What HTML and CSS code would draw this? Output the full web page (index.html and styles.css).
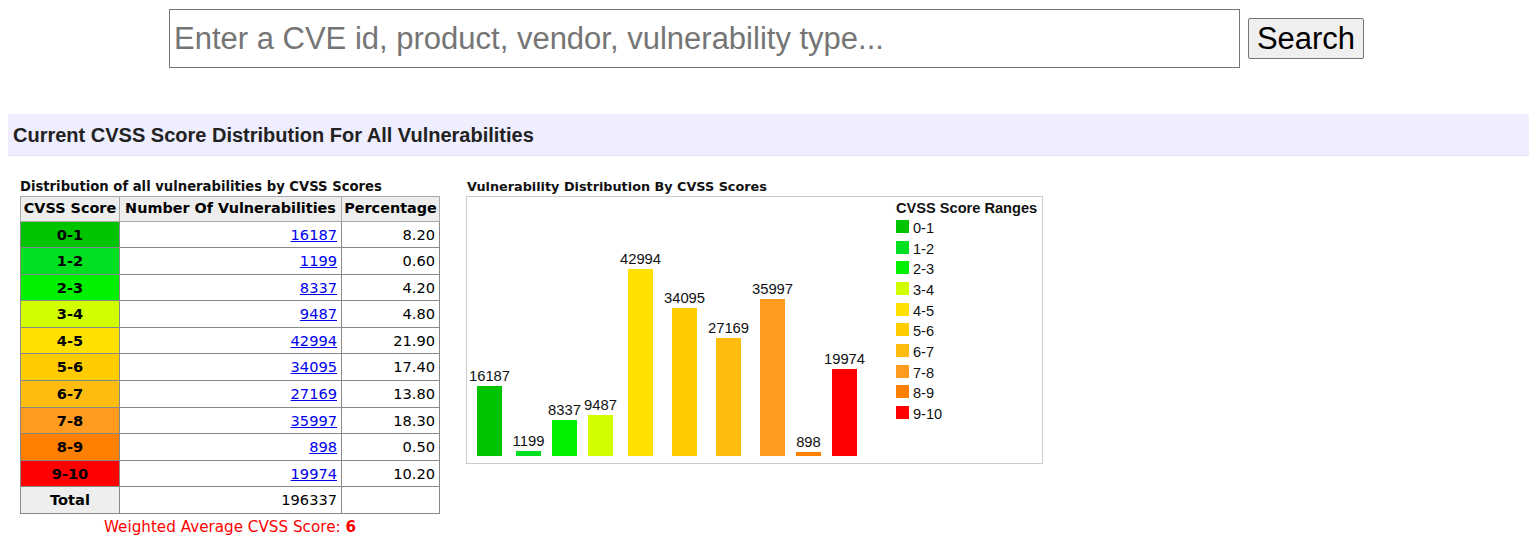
FILE: index.html
```html
<!DOCTYPE html>
<html>
<head>
<meta charset="utf-8">
<title>CVSS Score Distribution</title>
<link rel="stylesheet" href="styles.css">
</head>
<body>
<form class="search">
  <input class="search-input" type="text" placeholder="Enter a CVE id, product, vendor, vulnerability type...">
  <button class="search-btn" type="button">Search</button>
</form>

<h1 class="band">Current CVSS Score Distribution For All Vulnerabilities</h1>

<div class="stats">
  <div class="stats-table">
    <div class="caption cap-table">Distribution of all vulnerabilities by CVSS Scores</div>
    <table class="grid">
      <thead>
        <tr><th class="c1">CVSS Score</th><th class="c2">Number Of Vulnerabilities</th><th class="c3">Percentage</th></tr>
      </thead>
      <tbody>
        <tr><td class="score s0">0-1</td><td class="num"><a href="#">16187</a></td><td class="num">8.20</td></tr>
        <tr><td class="score s1">1-2</td><td class="num"><a href="#">1199</a></td><td class="num">0.60</td></tr>
        <tr><td class="score s2">2-3</td><td class="num"><a href="#">8337</a></td><td class="num">4.20</td></tr>
        <tr><td class="score s3">3-4</td><td class="num"><a href="#">9487</a></td><td class="num">4.80</td></tr>
        <tr><td class="score s4">4-5</td><td class="num"><a href="#">42994</a></td><td class="num">21.90</td></tr>
        <tr><td class="score s5">5-6</td><td class="num"><a href="#">34095</a></td><td class="num">17.40</td></tr>
        <tr><td class="score s6">6-7</td><td class="num"><a href="#">27169</a></td><td class="num">13.80</td></tr>
        <tr><td class="score s7">7-8</td><td class="num"><a href="#">35997</a></td><td class="num">18.30</td></tr>
        <tr><td class="score s8">8-9</td><td class="num"><a href="#">898</a></td><td class="num">0.50</td></tr>
        <tr><td class="score s9">9-10</td><td class="num"><a href="#">19974</a></td><td class="num">10.20</td></tr>
        <tr><td class="score total">Total</td><td class="num">196337</td><td class="num"></td></tr>
      </tbody>
    </table>
    <div class="weighted">Weighted Average CVSS Score: <b>6</b></div>
  </div>

  <div class="stats-chart">
    <div class="caption cap-chart">Vulnerability Distribution By CVSS Scores</div>
    <div class="chart">
      <div class="plot">
        <div class="col"><span class="val">16187</span><span class="bar s0" style="height:70.4px"></span></div>
        <div class="col"><span class="val">1199</span><span class="bar s1" style="height:5.2px"></span></div>
        <div class="col"><span class="val">8337</span><span class="bar s2" style="height:36.3px"></span></div>
        <div class="col"><span class="val">9487</span><span class="bar s3" style="height:41.3px"></span></div>
        <div class="col"><span class="val">42994</span><span class="bar s4" style="height:187px"></span></div>
        <div class="col"><span class="val">34095</span><span class="bar s5" style="height:148.3px"></span></div>
        <div class="col"><span class="val">27169</span><span class="bar s6" style="height:118.2px"></span></div>
        <div class="col"><span class="val">35997</span><span class="bar s7" style="height:156.6px"></span></div>
        <div class="col"><span class="val">898</span><span class="bar s8" style="height:3.9px"></span></div>
        <div class="col"><span class="val">19974</span><span class="bar s9" style="height:86.9px"></span></div>
      </div>
      <div class="legend">
        <div class="legend-title">CVSS Score Ranges</div>
        <div class="legend-item"><span class="sw s0"></span>0-1</div>
        <div class="legend-item"><span class="sw s1"></span>1-2</div>
        <div class="legend-item"><span class="sw s2"></span>2-3</div>
        <div class="legend-item"><span class="sw s3"></span>3-4</div>
        <div class="legend-item"><span class="sw s4"></span>4-5</div>
        <div class="legend-item"><span class="sw s5"></span>5-6</div>
        <div class="legend-item"><span class="sw s6"></span>6-7</div>
        <div class="legend-item"><span class="sw s7"></span>7-8</div>
        <div class="legend-item"><span class="sw s8"></span>8-9</div>
        <div class="legend-item"><span class="sw s9"></span>9-10</div>
      </div>
    </div>
  </div>
</div>
</body>
</html>
```

FILE: styles.css
```css
body {
  margin: 8px;
  font-family: "DejaVu Sans", Verdana, sans-serif;
  color: #000;
  background: #fff;
}

.search {
  display: flex;
  justify-content: center;
  align-items: center;
  gap: 8px;
  margin: 1px 0 0 -4px;
}

.search-input {
  box-sizing: border-box;
  width: 1071px;
  height: 59px;
  margin: 0;
  padding: 0 4px;
  border: 1px solid #767676;
  border-radius: 0;
  font-family: "Liberation Sans", Arial, sans-serif;
  font-size: 31px;
  color: #000;
}

.search-input::placeholder {
  color: #757575;
}

.search-btn {
  box-sizing: border-box;
  width: 116px;
  height: 41px;
  margin: 0;
  padding: 0;
  border: 1px solid #767676;
  border-radius: 2px;
  background: #efefef;
  font-family: "Liberation Sans", Arial, sans-serif;
  font-size: 31px;
  color: #000;
}

.band {
  margin: 46px 0 0;
  padding: 11px 5px 9px;
  line-height: 21px;
  background: #eeeeff;
  border-bottom: 1px solid #ddddf5;
  font-family: "Liberation Sans", Arial, sans-serif;
  font-size: 20px;
  font-weight: bold;
  color: #222;
}

.stats {
  display: flex;
  align-items: flex-start;
  gap: 26px;
  margin-top: 23px;
  padding-left: 12px;
}

.caption {
  font-weight: bold;
  line-height: 16px;
  height: 17px;
  color: #111;
  white-space: nowrap;
}

.cap-table {
  font-size: 13.2px;
}

.cap-chart {
  font-size: 12.8px;
  padding-left: 1px;
}

.grid {
  border-collapse: collapse;
  border: 1px solid #999;
  font-size: 14.6px;
}

.grid th,
.grid td {
  border: 1px solid #888;
  padding: 0;
  white-space: nowrap;
}

.grid th {
  background: #eeeeee;
  border-color: #aaa;
  font-size: 14.4px;
  font-weight: bold;
  line-height: 23.7px;
  padding: 0 1px;
}

.grid td {
  line-height: 25.55px;
}

.c1 { width: 96px; }
.c2 { width: 219px; }
.c3 { width: 95px; }

.score {
  text-align: center;
  font-weight: bold;
}

.total {
  background: #eeeeee;
}

.num {
  text-align: right;
  padding-right: 4px !important;
}

.num a {
  color: #0000ee;
}

.weighted {
  margin-top: 4px;
  text-align: center;
  font-size: 15.2px;
  line-height: 18px;
  color: #ff0000;
}

.s0 { background: #00c400; }
.s1 { background: #00e020; }
.s2 { background: #00f000; }
.s3 { background: #d1ff00; }
.s4 { background: #ffe000; }
.s5 { background: #ffcc00; }
.s6 { background: #ffbc10; }
.s7 { background: #ff9c20; }
.s8 { background: #ff8000; }
.s9 { background: #ff0000; }

.chart {
  display: flex;
  align-items: flex-start;
  box-sizing: border-box;
  width: 577px;
  height: 268px;
  border: 1px solid #cccccc;
  font-family: "Liberation Sans", Arial, sans-serif;
}

.plot {
  display: grid;
  grid-template-columns: 39px 36px 36px 40px 44px 44px 44px 36px 36px 25px;
  align-items: end;
  justify-items: start;
  height: 259px;
  margin-left: 10px;
}

.col {
  display: flex;
  flex-direction: column;
  align-items: center;
  width: 25px;
}

.val {
  font-size: 14.8px;
  line-height: 16px;
  margin-bottom: 2px;
  white-space: nowrap;
  color: #111;
}

.bar {
  display: block;
  width: 25px;
}

.legend {
  margin-left: 39px;
  padding-top: 2.5px;
}

.legend-title {
  font-size: 14.6px;
  font-weight: bold;
  line-height: 17px;
  margin-bottom: 1.5px;
  white-space: nowrap;
  color: #111;
}

.legend-item {
  display: flex;
  align-items: flex-start;
  gap: 4px;
  height: 20.67px;
  line-height: 20.67px;
  font-size: 14.6px;
  color: #111;
}

.sw {
  width: 13px;
  height: 13px;
  margin-top: 2px;
}
```
